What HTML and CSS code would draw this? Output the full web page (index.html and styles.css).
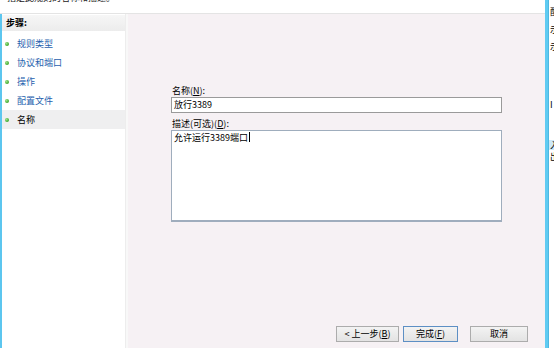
FILE: index.html
```html
<!DOCTYPE html>
<html lang="zh-CN">
<head>
<meta charset="utf-8">
<title>新建入站规则向导 - 名称</title>
<link rel="stylesheet" href="styles.css">
</head>
<body>
<div class="window">
  <div class="main">
    <div class="topbar"><div class="toptext">指定此规则的名称和描述。</div></div>
    <div class="body">
      <div class="edge"></div>
      <nav class="steps">
        <div class="steps-head">步骤:</div>
        <ul class="step-list">
          <li class="step"><span class="dot"></span><span class="link">规则类型</span></li>
          <li class="step"><span class="dot"></span><span class="link">协议和端口</span></li>
          <li class="step"><span class="dot"></span><span class="link">操作</span></li>
          <li class="step"><span class="dot"></span><span class="link">配置文件</span></li>
          <li class="step current"><span class="dot"></span><span>名称</span></li>
        </ul>
      </nav>
      <div class="divider"></div>
      <section class="form">
        <div class="lbl">名称(<u>N</u>):</div>
        <div class="input">放行3389</div>
        <div class="lbl lbl2">描述(可选)(<u>D</u>):</div>
        <div class="textarea">允许运行3389端口<span class="caret"></span></div>
        <div class="buttons">
          <div class="btn btn-back">&lt; 上一步(<u>B</u>)</div>
          <div class="btn btn-finish">完成(<u>F</u>)</div>
          <div class="btn btn-cancel">取消</div>
        </div>
      </section>
    </div>
  </div>
  <div class="bluebar"></div>
  <div class="behind">
    <div class="frag f1">配</div>
    <div class="frag f2">示</div>
    <div class="frag f3">示</div>
    <div class="frag f4">I</div>
    <div class="frag hl">入</div>
    <div class="frag f6">出</div>
  </div>
</div>
</body>
</html>
```
FILE: styles.css
```css
html, body {
  margin: 0;
  padding: 0;
}
body {
  font-family: "Noto Sans CJK SC", "Liberation Sans", sans-serif;
  font-size: 9px;
  color: #000;
  background: #fff;
}
.window {
  display: flex;
  width: 554px;
  height: 348px;
  overflow: hidden;
}
.main {
  width: 545px;
  display: flex;
  flex-direction: column;
}
.topbar {
  height: 13px;
  border-bottom: 1px solid #e4e4e4;
  background: #fff;
  overflow: hidden;
}
.toptext {
  margin-top: -8px;
  padding-left: 7px;
  line-height: 12px;
  color: #222;
}
.body {
  flex: 1;
  display: flex;
}
.edge {
  width: 2px;
  background: #5cc6ef;
}
.steps {
  width: 123px;
  background: #fff;
}
.steps-head {
  margin-top: 1px;
  height: 16px;
  line-height: 16px;
  padding-left: 4px;
  font-weight: bold;
  background: linear-gradient(#f6f6f6, #ececec);
}
.step-list {
  list-style: none;
  margin: 3px 0 0;
  padding: 0;
}
.step {
  height: 19px;
  display: flex;
  align-items: center;
  padding-left: 3px;
}
.step.current {
  background: #efeff0;
}
.dot {
  width: 4px;
  height: 4px;
  border-radius: 50%;
  background: radial-gradient(circle at 35% 35%, #9be28a, #3fa82c 70%);
  margin-right: 8px;
}
.link {
  color: #1f5fae;
}
.divider {
  width: 2px;
  background: #f8f8f8;
  border-left: 1px solid #ededed;
}
.form {
  width: 331px;
  flex: 1;
  display: flex;
  flex-direction: column;
  padding: 70px 43px 6px 43px;
  background: #f6f1f4;
}
.lbl {
  height: 13px;
  line-height: 13px;
  padding-left: 1px;
}
.lbl2 {
  margin-top: 4px;
}
.input {
  height: 14px;
  line-height: 14px;
  border: 1px solid #9a9a9a;
  background: #fff;
  padding-left: 2px;
}
.textarea {
  height: 89px;
  border: 1px solid #9fadbd;
  border-bottom-width: 2px;
  background: #fff;
  padding-left: 2px;
  line-height: 14px;
  margin-top: 0;
}
.caret {
  display: inline-block;
  width: 1px;
  height: 10px;
  background: #000;
  vertical-align: -1px;
  margin-left: 1px;
}
.buttons {
  margin-top: auto;
  margin-right: -26px;
  display: flex;
  justify-content: flex-end;
}
.btn {
  height: 14px;
  line-height: 14px;
  border: 1px solid #acacac;
  background: linear-gradient(#f3f3f3, #e3e3e3);
  text-align: center;
}
.btn-back {
  width: 61px;
}
.btn-finish {
  width: 53px;
  margin-left: 4px;
  border-color: #5d8fc4;
}
.btn-cancel {
  width: 56px;
  margin-left: 12px;
}
.bluebar {
  width: 4px;
  background: linear-gradient(90deg, #5fcbf2 0, #5fcbf2 75%, #3fa7cf 100%);
}
.behind {
  width: 5px;
  background: #fff;
  overflow: hidden;
  white-space: nowrap;
}
.frag {
  height: 10px;
  line-height: 10px;
  padding-left: 1px;
}
.f1 { margin-top: 7px; }
.f2 { margin-top: 8px; }
.f3 { margin-top: 7px; }
.f4 { margin-top: 48px; }
.hl { margin-top: 30px; background: #cde8f7; }
.f6 { margin-top: 2px; }
```
